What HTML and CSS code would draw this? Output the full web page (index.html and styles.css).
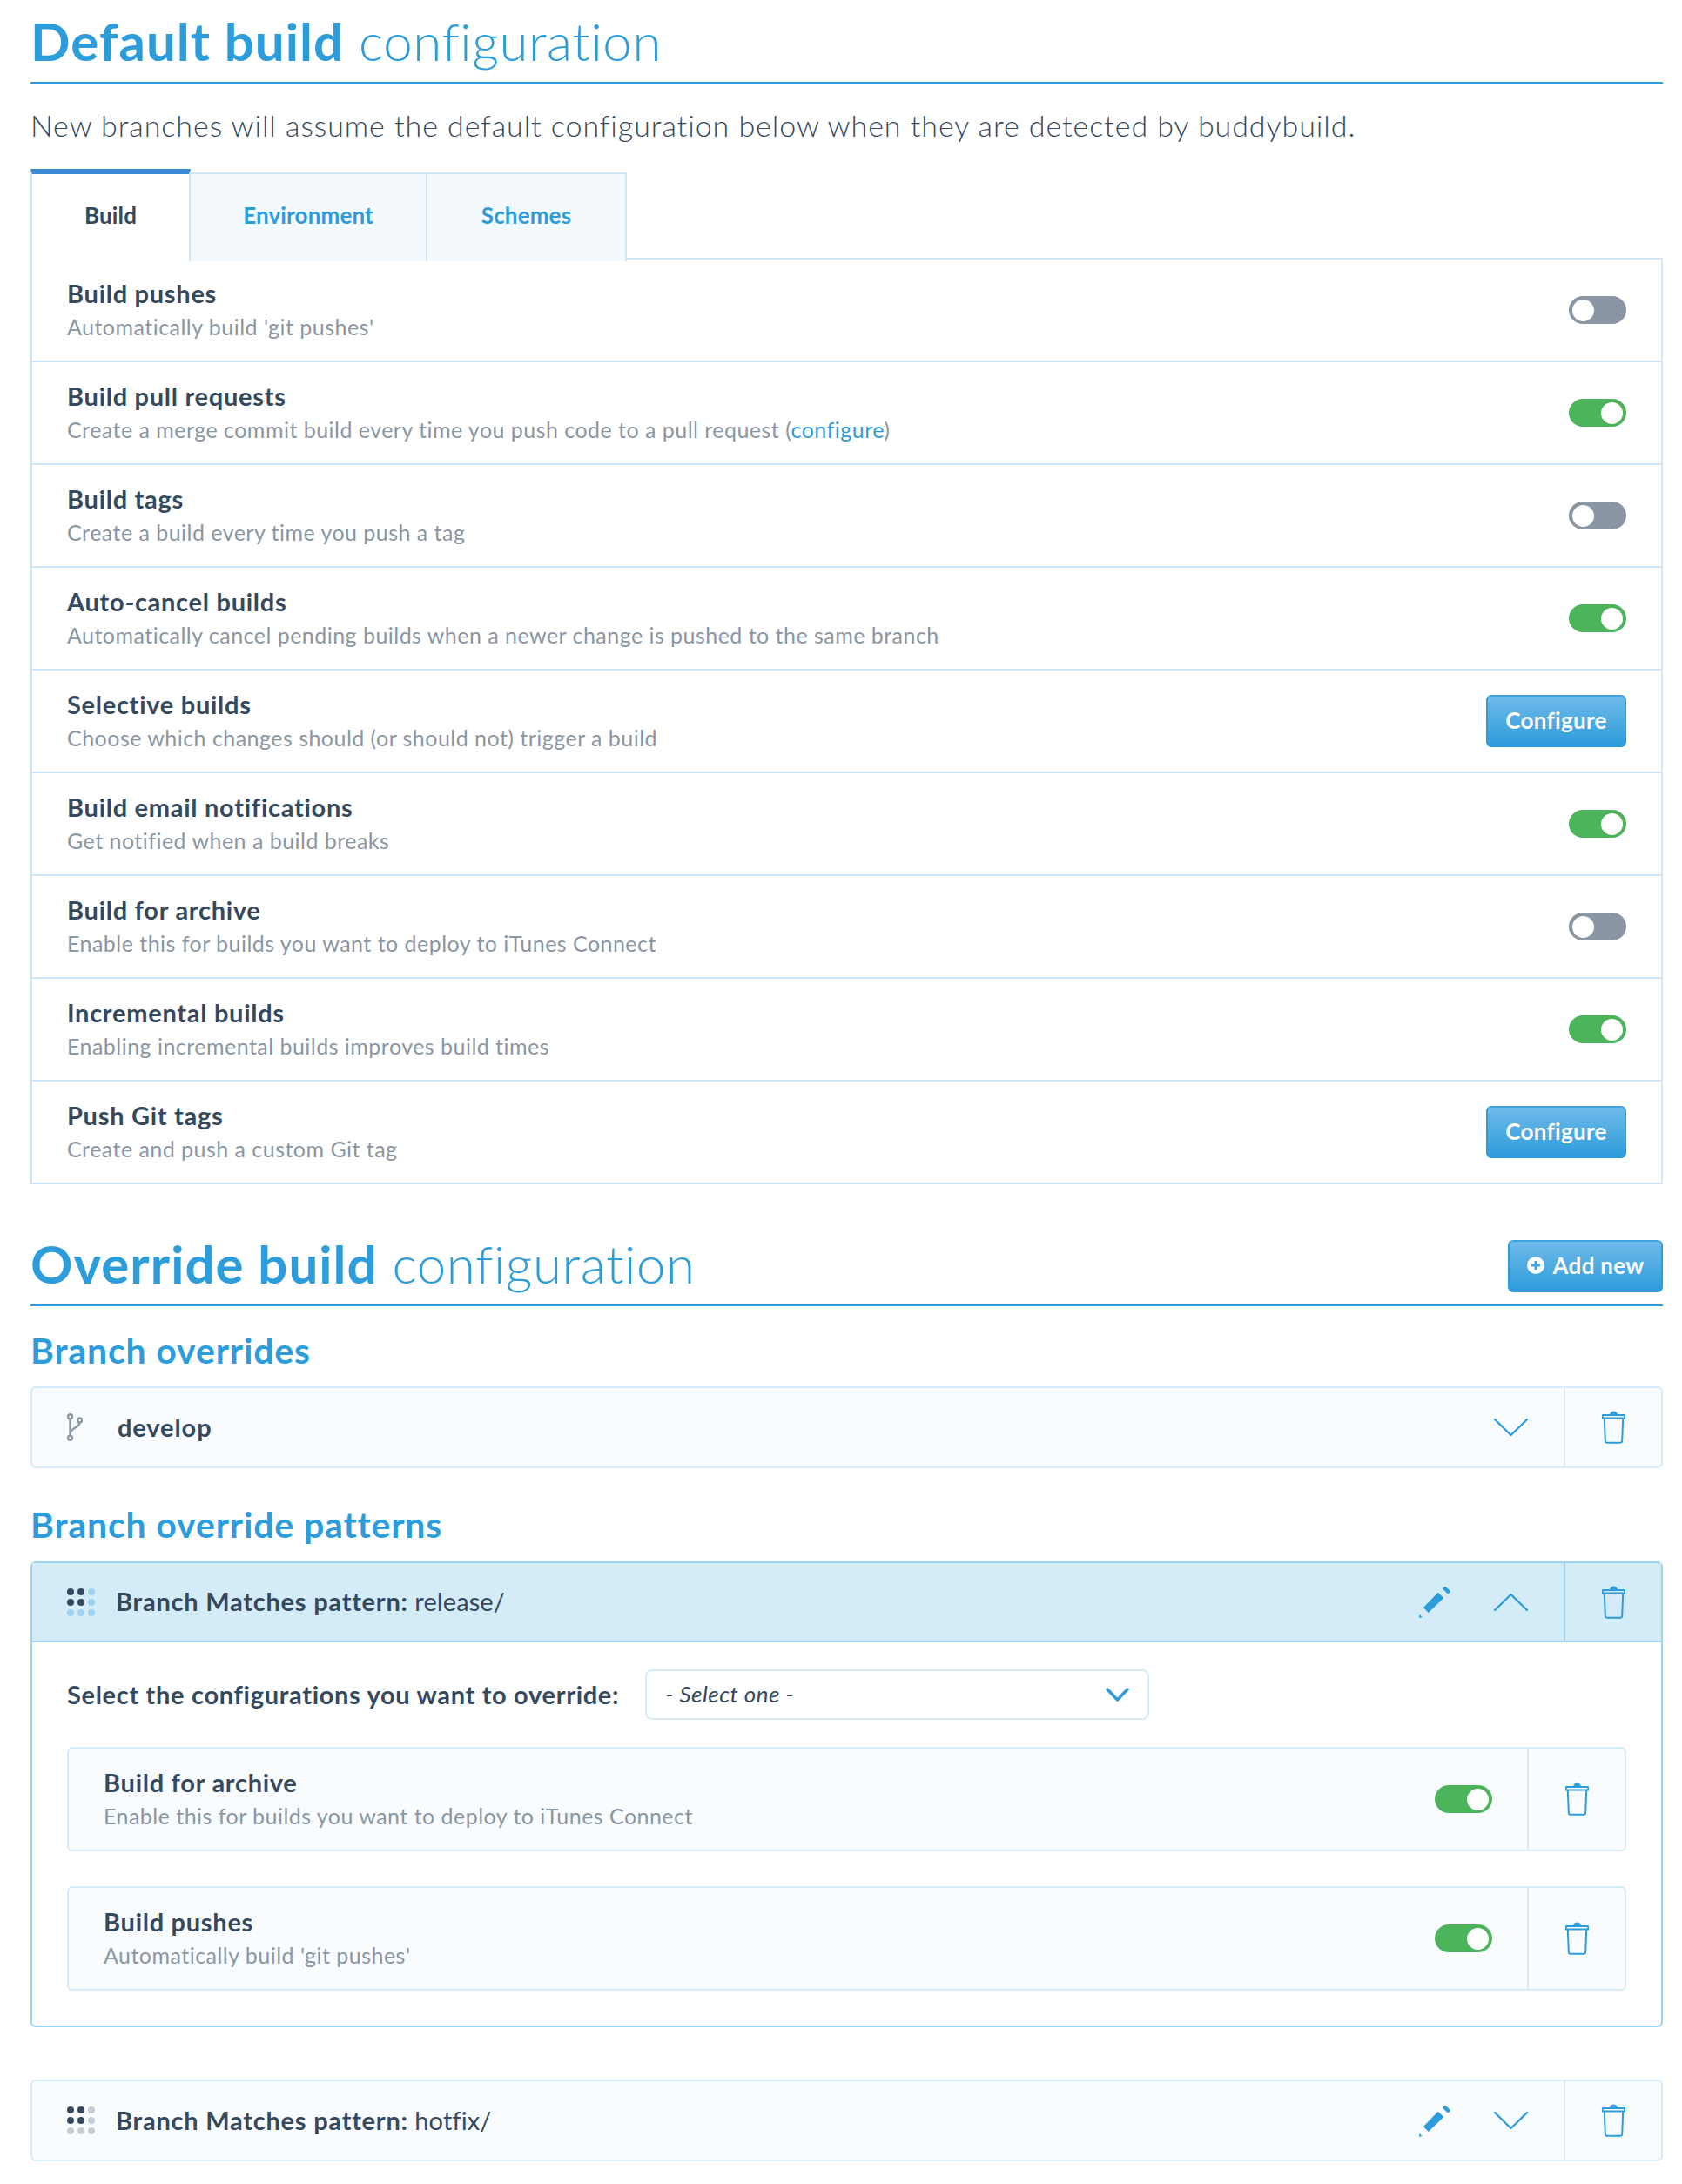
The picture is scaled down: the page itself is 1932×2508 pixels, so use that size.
FILE: index.html
```html
<!DOCTYPE html>
<html>

<head>
    <meta charset="UTF-8">
    <title>Build settings</title>
    <link rel="stylesheet" href="styles.css">
</head>

<body>
    <svg class="sprites" width="0" height="0">
        <symbol id="chevron" viewBox="0 0 39 20">
            <path d="M1 1L19.5 19L38 1" fill="none" stroke="currentColor" stroke-width="2.4" stroke-linecap="round" stroke-linejoin="round" />
        </symbol>
        <symbol id="trash" viewBox="0 0 27 38">
            <path d="M9 4C10 1.5 11.5 0.5 13.5 0.5C15.5 0.5 17 1.5 18 4Z" fill="currentColor" />
            <path d="M1 5H26L26.5 8.5H0.5Z" fill="none" stroke="currentColor" stroke-width="2" stroke-linejoin="round" />
            <path d="M2.8 9L3.8 34.5C3.9 36 4.8 36.8 6 36.8H21C22.2 36.8 23.1 36 23.2 34.5L24.2 9" fill="none" stroke="currentColor" stroke-width="2" />
        </symbol>
        <symbol id="pencil" viewBox="0 0 36 37">
            <path d="M5 25L10.7 31L28.3 14L21.7 7.7Z" fill="currentColor" />
            <path d="M0.4 33L3.6 36L0 37Z" fill="currentColor" />
            <path d="M26.7 3.3L30 0.7L35.7 5.7V7.7L32.7 9.3Z" fill="currentColor" />
        </symbol>
        <symbol id="dots" viewBox="0 0 32 32">
            <circle cx="4" cy="4" r="4" fill="#34495e" />
            <circle cx="16" cy="4" r="4" fill="#34495e" />
            <circle cx="28" cy="4" r="4" />
            <circle cx="4" cy="16" r="4" fill="#34495e" />
            <circle cx="16" cy="16" r="4" fill="#34495e" />
            <circle cx="28" cy="16" r="4" />
            <circle cx="4" cy="28" r="4" />
            <circle cx="16" cy="28" r="4" />
            <circle cx="28" cy="28" r="4" />
        </symbol>
    </svg>

    <div class="page">
        <div class="heading">
            <h1><b>Default build</b> configuration</h1>
        </div>
        <p class="intro">New branches will assume the default configuration below when they are detected by buddybuild.</p>

        <ul class="tabs">
            <li class="tab tab_active">Build</li>
            <li class="tab tab_env">Environment</li>
            <li class="tab tab_schemes">Schemes</li>
        </ul>

        <div class="panel">
            <div class="row">
                <div class="text">
                    <div class="name">Build pushes</div>
                    <div class="desc">Automatically build 'git pushes'</div>
                </div>
                <span class="toggle"><i></i></span>
            </div>
            <div class="row">
                <div class="text">
                    <div class="name">Build pull requests</div>
                    <div class="desc">Create a merge commit build every time you push code to a pull request (<a href="#">configure</a>)</div>
                </div>
                <span class="toggle on"><i></i></span>
            </div>
            <div class="row">
                <div class="text">
                    <div class="name">Build tags</div>
                    <div class="desc">Create a build every time you push a tag</div>
                </div>
                <span class="toggle"><i></i></span>
            </div>
            <div class="row">
                <div class="text">
                    <div class="name">Auto-cancel builds</div>
                    <div class="desc">Automatically cancel pending builds when a newer change is pushed to the same branch</div>
                </div>
                <span class="toggle on"><i></i></span>
            </div>
            <div class="row">
                <div class="text">
                    <div class="name">Selective builds</div>
                    <div class="desc">Choose which changes should (or should not) trigger a build</div>
                </div>
                <a class="btn btn_config" href="#">Configure</a>
            </div>
            <div class="row">
                <div class="text">
                    <div class="name">Build email notifications</div>
                    <div class="desc">Get notified when a build breaks</div>
                </div>
                <span class="toggle on"><i></i></span>
            </div>
            <div class="row">
                <div class="text">
                    <div class="name">Build for archive</div>
                    <div class="desc">Enable this for builds you want to deploy to iTunes Connect</div>
                </div>
                <span class="toggle"><i></i></span>
            </div>
            <div class="row">
                <div class="text">
                    <div class="name">Incremental builds</div>
                    <div class="desc">Enabling incremental builds improves build times</div>
                </div>
                <span class="toggle on"><i></i></span>
            </div>
            <div class="row">
                <div class="text">
                    <div class="name">Push Git tags</div>
                    <div class="desc">Create and push a custom Git tag</div>
                </div>
                <a class="btn btn_config" href="#">Configure</a>
            </div>
        </div>

        <div class="heading heading_override">
            <h1><b>Override build</b> configuration</h1>
            <a class="btn btn_add" href="#">
                <svg class="plus" viewBox="0 0 20 20">
                    <circle cx="10" cy="10" r="10" fill="#fff" />
                    <path d="M10 5V15M5 10H15" stroke="#3fa3e0" stroke-width="3" />
                </svg>
                Add new
            </a>
        </div>

        <h2 class="first">Branch overrides</h2>
        <div class="card">
            <div class="card_main">
                <svg class="branch" viewBox="0 0 18 32" fill="none" stroke="#8a96a3" stroke-width="2.4">
                    <circle cx="3.5" cy="3.7" r="2.5" />
                    <circle cx="14.7" cy="8" r="2.5" />
                    <circle cx="3.5" cy="28.3" r="2.5" />
                    <path d="M3.5 6.2V25.8M14.7 10.5C14.7 16 4 17 3.5 23" />
                </svg>
                <span class="branch_name">develop</span>
                <svg class="chevron"><use href="#chevron" /></svg>
            </div>
            <div class="card_del"><svg class="trash"><use href="#trash" /></svg></div>
        </div>

        <h2>Branch override patterns</h2>
        <div class="card card_open">
            <div class="card_head">
                <div class="card_main">
                    <svg class="dots"><use href="#dots" /></svg>
                    <span class="pattern"><b>Branch Matches pattern:</b> release/</span>
                    <svg class="pencil"><use href="#pencil" /></svg>
                    <svg class="chevron chevron_up"><use href="#chevron" /></svg>
                </div>
                <div class="card_del"><svg class="trash"><use href="#trash" /></svg></div>
            </div>
            <div class="card_body">
                <div class="select_row">
                    <label class="select_label">Select the configurations you want to override:</label>
                    <div class="select">
                        <span class="select_text">- Select one -</span>
                        <svg class="select_arrow" viewBox="0 0 27 16">
                            <path d="M2 2L13.5 14L25 2" fill="none" stroke="#2d9cdb" stroke-width="3.4" stroke-linecap="round" stroke-linejoin="round" />
                        </svg>
                    </div>
                </div>
                <div class="sub_card">
                    <div class="sub_main">
                        <div class="text">
                            <div class="name">Build for archive</div>
                            <div class="desc">Enable this for builds you want to deploy to iTunes Connect</div>
                        </div>
                        <span class="toggle on"><i></i></span>
                    </div>
                    <div class="sub_del"><svg class="trash"><use href="#trash" /></svg></div>
                </div>
                <div class="sub_card">
                    <div class="sub_main">
                        <div class="text">
                            <div class="name">Build pushes</div>
                            <div class="desc">Automatically build 'git pushes'</div>
                        </div>
                        <span class="toggle on"><i></i></span>
                    </div>
                    <div class="sub_del"><svg class="trash"><use href="#trash" /></svg></div>
                </div>
            </div>
        </div>

        <div class="card card_last">
            <div class="card_main">
                <svg class="dots"><use href="#dots" /></svg>
                <span class="pattern"><b>Branch Matches pattern:</b> hotfix/</span>
                <svg class="pencil"><use href="#pencil" /></svg>
                <svg class="chevron"><use href="#chevron" /></svg>
            </div>
            <div class="card_del"><svg class="trash"><use href="#trash" /></svg></div>
        </div>
    </div>
</body>

</html>
```

FILE: styles.css
```css
* {
    padding: 0;
    margin: 0;
    box-sizing: border-box;
}

li {
    list-style: none;
}

a {
    text-decoration: none;
    color: #2d9cdb;
}

body {
    background: #fff;
    color: #34495e;
    font-family: "Lato", "Liberation Sans", sans-serif;
    font-variant-ligatures: none;
}

.sprites {
    display: block;
    height: 0;
}

.page {
    width: 1875px;
    margin-left: 35px;
    padding-bottom: 26px;
}

/* headings */
.heading {
    display: flex;
    justify-content: space-between;
    align-items: flex-start;
    height: 96px;
    border-bottom: 2px solid #2d9cdb;
}

.heading_override {
    margin-top: 44px;
}

h1 {
    font-size: 60px;
    line-height: 94px;
    font-weight: 300;
    letter-spacing: 0.55px;
    color: #2d9cdb;
    white-space: nowrap;
}

h1 b {
    font-weight: 700;
    letter-spacing: 1.05px;
}

h2 {
    margin-top: 41px;
    margin-bottom: 18px;
    font-size: 41px;
    line-height: 48px;
    font-weight: 700;
    letter-spacing: 0.85px;
    color: #2d9cdb;
}

h2.first {
    margin-top: 27px;
    margin-bottom: 17px;
}

.intro {
    margin-top: 24px;
    margin-bottom: 26px;
    font-size: 34px;
    line-height: 48px;
    font-weight: 300;
    letter-spacing: 0.94px;
}

/* tabs */
.tabs {
    display: flex;
    align-items: flex-start;
    height: 102px;
}

.tab {
    position: relative;
    display: flex;
    justify-content: center;
    align-items: center;
    height: 102px;
    margin-top: 4px;
    padding-bottom: 6px;
    border: 2px solid #cfe7f6;
    border-left: 0;
    border-bottom: 0;
    background: #f4f9fd;
    color: #2d9cdb;
    font-size: 26px;
    font-weight: 700;
    letter-spacing: 0.15px;
}

.tab_active {
    z-index: 1;
    width: 184px;
    height: 106px;
    margin-top: 0;
    padding-bottom: 6px;
    border-top: 6px solid #3a8ad6;
    border-left: 2px solid #cfe7f6;
    background: #fff;
    color: #34495e;
}

.tab_env {
    width: 272px;
}

.tab_schemes {
    width: 229px;
}

/* settings rows */
.panel {
    border: 2px solid #cfe7f6;
    border-bottom: 0;
}

.row {
    display: flex;
    justify-content: space-between;
    align-items: center;
    height: 118px;
    padding: 0 40px;
    border-bottom: 2px solid #cfe7f6;
}

.name {
    font-size: 29px;
    line-height: 34px;
    font-weight: 700;
    letter-spacing: 0.72px;
}

.desc {
    margin-top: 3px;
    font-size: 25px;
    line-height: 36px;
    letter-spacing: 0.47px;
    color: #8a96a3;
}

.toggle {
    display: flex;
    align-items: center;
    flex-shrink: 0;
    width: 66px;
    height: 32px;
    padding: 0 4px;
    border-radius: 16px;
    background: #8a96a3;
}

.toggle i {
    display: block;
    width: 25px;
    height: 25px;
    border-radius: 50%;
    background: #fff;
}

.toggle.on {
    justify-content: flex-end;
    background: #4cb55c;
}

/* buttons */
.btn {
    display: flex;
    justify-content: center;
    align-items: center;
    height: 60px;
    padding-bottom: 2px;
    border: 2px solid #2d9cdb;
    border-top-color: #3fa3e0;
    border-radius: 6px;
    background: linear-gradient(#6fbae9, #2d9cdb);
    color: #fff;
    font-size: 26px;
    font-weight: 700;
    letter-spacing: 0.3px;
}

.btn_config {
    width: 161px;
}

.btn_add {
    gap: 10px;
    width: 178px;
    margin-top: 20px;
}

.plus {
    width: 20px;
    height: 20px;
}

/* override cards */
.card {
    display: flex;
    height: 94px;
    border: 2px solid #d6ebf8;
    border-radius: 6px;
    background: #f9fcff;
}

.card_last {
    margin-top: 60px;
}

.card_main {
    display: flex;
    flex: 1;
    align-items: center;
    padding: 0 41px 0 40px;
}

.card_del {
    display: flex;
    justify-content: center;
    align-items: center;
    width: 112px;
    border-left: 2px solid #d6ebf8;
}

.branch {
    width: 18px;
    height: 32px;
    margin-right: 40px;
}

.branch_name {
    flex: 1;
    margin-bottom: 2px;
    font-size: 29px;
    font-weight: 700;
    letter-spacing: 0.9px;
}

.chevron {
    width: 39px;
    height: 20px;
    color: #2d9cdb;
}

.chevron_up {
    transform: rotate(180deg);
}

.trash {
    width: 27px;
    height: 38px;
    color: #2d9cdb;
}

.pencil {
    width: 36px;
    height: 37px;
    margin-right: 50px;
    color: #2d9cdb;
}

.dots {
    width: 32px;
    height: 32px;
    margin-right: 24px;
    fill: #c5ccd4;
}

.pattern {
    flex: 1;
    margin-bottom: 2px;
    font-size: 29px;
    letter-spacing: 0.1px;
}

.pattern b {
    font-weight: 700;
    letter-spacing: 0.76px;
}

/* open card */
.card_open {
    display: block;
    height: 535px;
    border-color: #9fd2f1;
    background: #fff;
}

.card_head {
    display: flex;
    height: 91px;
    border-bottom: 2px solid #9fd2f1;
    background: #d4ebf8;
}

.card_head .card_del {
    border-left-color: #9fd2f1;
}

.card_head .dots {
    fill: #9fd2f1;
}

.card_body {
    padding: 31px 40px 0;
}

.select_row {
    display: flex;
    align-items: center;
    gap: 30px;
    height: 58px;
    margin-bottom: 31px;
}

.select_label {
    margin-bottom: 2px;
    font-size: 29px;
    font-weight: 700;
    letter-spacing: 0.68px;
}

.select {
    display: flex;
    justify-content: space-between;
    align-items: center;
    width: 579px;
    height: 58px;
    padding: 0 21px;
    border: 2px solid #d6ebf8;
    border-radius: 8px;
    font-size: 26px;
    font-style: italic;
    letter-spacing: 0.5px;
}

.select_text {
    margin-bottom: 2px;
}

.select_arrow {
    width: 27px;
    height: 16px;
}

.sub_card {
    display: flex;
    height: 120px;
    margin-bottom: 40px;
    border: 2px solid #d6ebf8;
    border-radius: 6px;
    background: #f9fcff;
}

.sub_main {
    display: flex;
    flex: 1;
    justify-content: space-between;
    align-items: center;
    padding: 0 40px;
}

.sub_del {
    display: flex;
    justify-content: center;
    align-items: center;
    width: 112px;
    border-left: 2px solid #d6ebf8;
}
```
